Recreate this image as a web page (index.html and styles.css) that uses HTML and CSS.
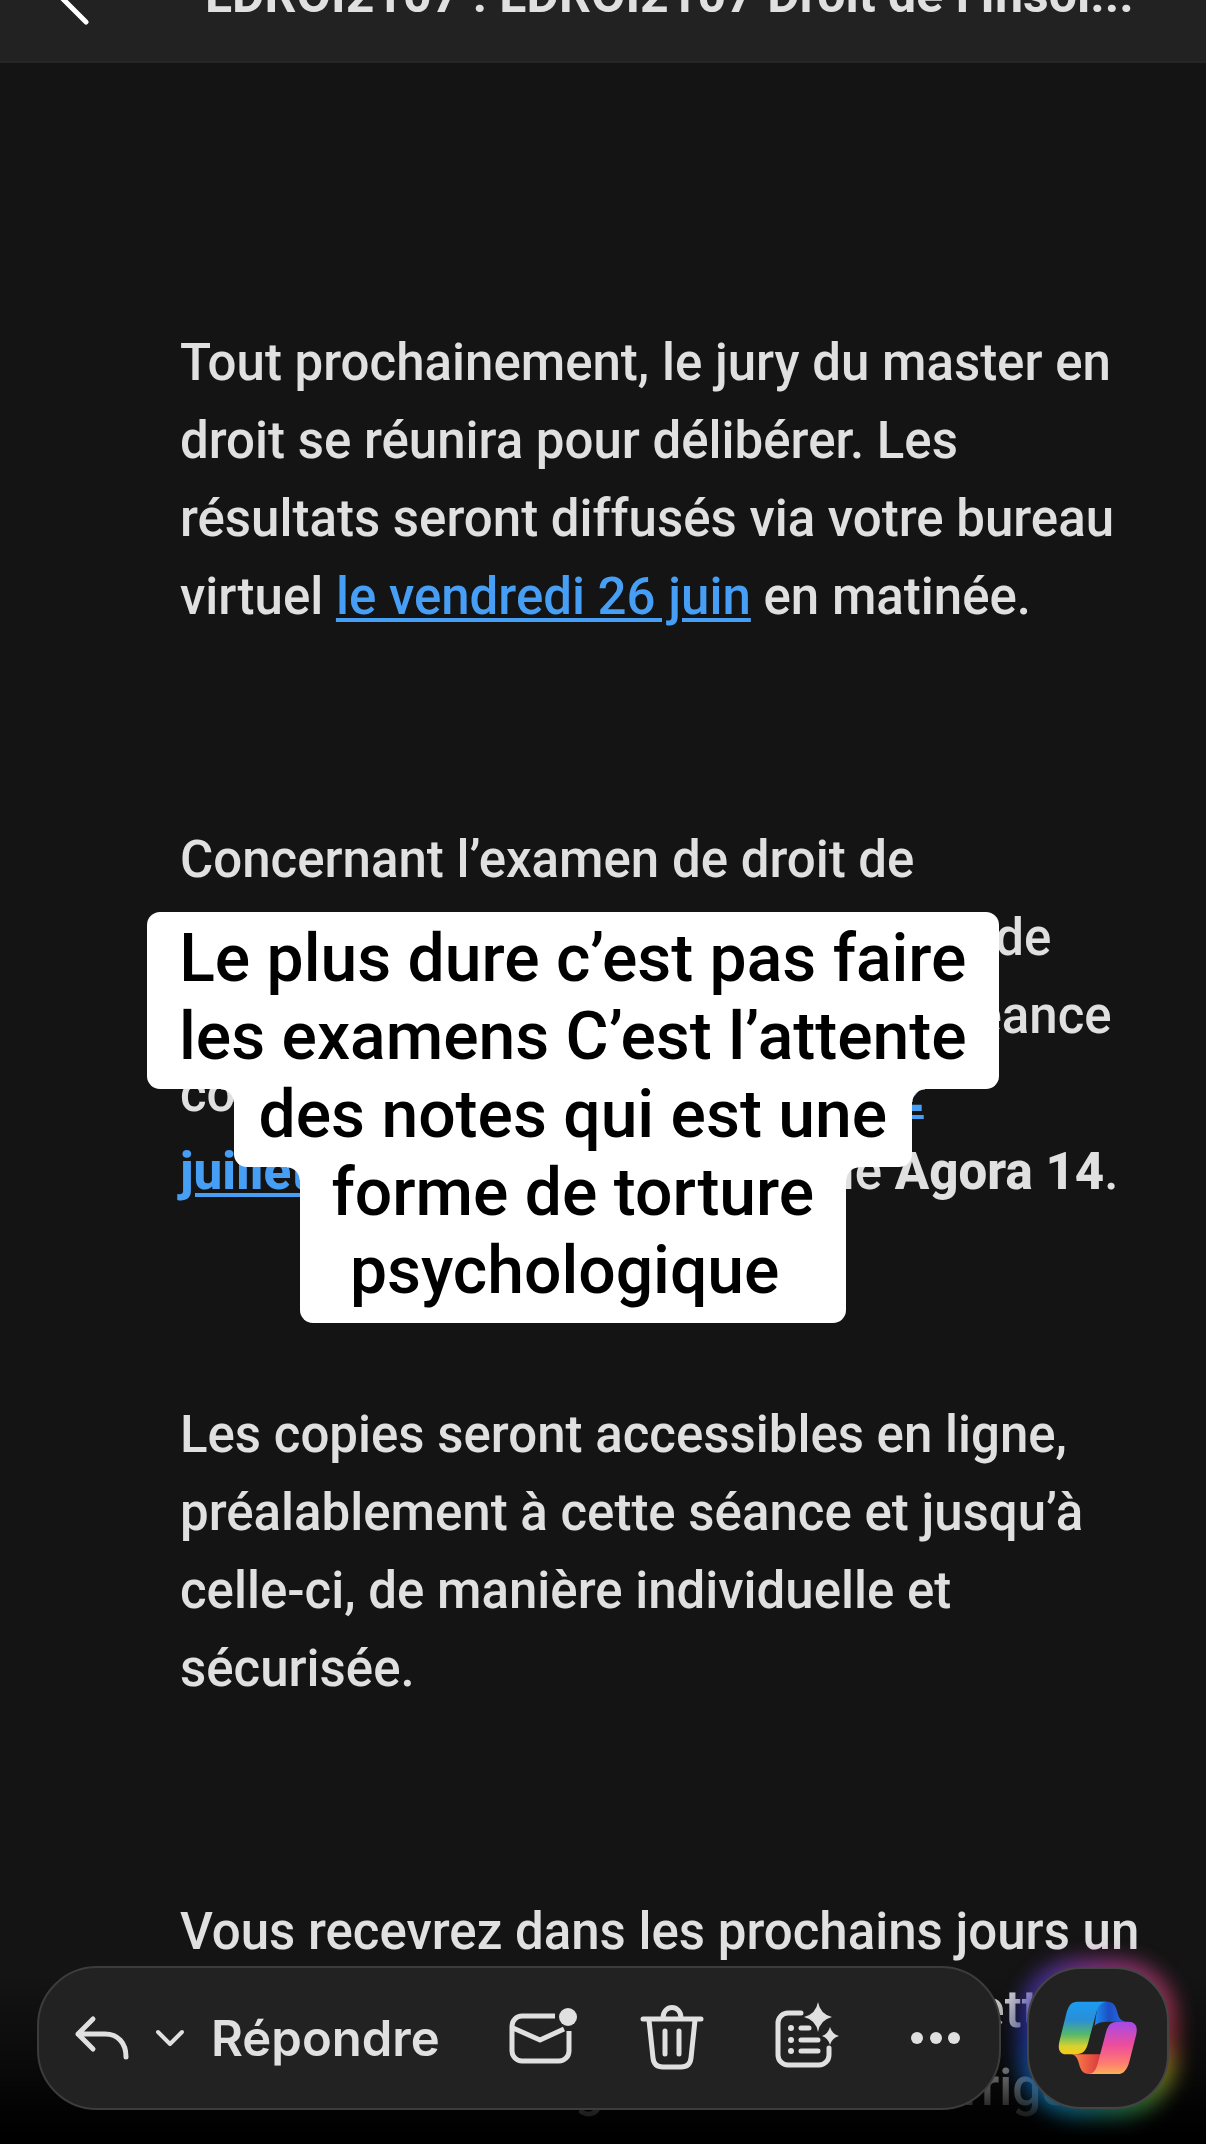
FILE: index.html
```
<!DOCTYPE html>
<html lang="fr">
<head>
    <meta charset="UTF-8">
    <meta name="viewport" content="width=device-width, initial-scale=1.0">
    <title>LDROI2107</title>
    <link rel="stylesheet" href="styles.css">
</head>
<body>
    <header class="topbar">
        <button class="back-button" aria-label="Retour">
            <svg width="34" height="60" viewBox="0 0 34 60"><path d="M30 57 L3 30 L30 3"/></svg>
        </button>
        <h1 class="subject">LDROI2107 : LDROI2107 Droit de l’Insol...</h1>
    </header>

    <main class="mail">
        <p>Tout prochainement, le jury du master en<br>
        droit se réunira pour délibérer. Les<br>
        résultats seront diffusés via votre bureau<br>
        virtuel <a href="#">le vendredi 26 juin</a> en matinée.</p>

        <p>Concernant l’examen de droit de<br>
        l’insolvabilité, une séance publique, de<br>
        consultation sera tenue dans une séance<br>
        collective programmée <a class="strong" href="#">le jeudi 2<br>
        juillet</a> de 10 h à 12 h en la salle <b>Agora 14</b>.</p>

        <p>Les copies seront accessibles en ligne,<br>
        préalablement à cette séance et jusqu’à<br>
        celle-ci, de manière individuelle et<br>
        sécurisée.</p>

        <p>Vous recevrez dans les prochains jours un<br>
        courriel avec les consignes et une lettre<br>
        sur l’examen en ligne et donc le corrigé</p>
    </main>

    <!-- Texte posé sur la vidéo -->
    <div class="caption">
        <div class="caption-block">Le plus dure c’est pas faire<br>les examens C’est l’attente</div>
        <div class="caption-block narrow">des notes qui est une</div>
        <div class="caption-block">forme de torture<br>psychologique&nbsp;</div>
    </div>

    <footer class="bottom">
        <div class="toolbar">
            <button class="reply-button">
                <svg width="54" height="44" viewBox="0 0 54 44"><path d="M18 3 L3 18 L18 33 M3 18 H30 C43 18 51 27 51 41"/></svg>
                <svg width="30" height="44" viewBox="0 0 30 44"><path class="thin" d="M3 16 L15 28 L27 16"/></svg>
                <span>Répondre</span>
            </button>
            <button class="icon-button" aria-label="Marquer comme non lu">
                <svg width="72" height="72" viewBox="-4 0 72 72">
                    <path class="butt" d="M51 14 H18 A10 10 0 0 0 8 24 V49 A10 10 0 0 0 18 59 H55 A10 10 0 0 0 65 49 V29 M9 26 L36 38 L60 27"/>
                    <circle class="fill" cx="64" cy="15" r="9"/>
                </svg>
            </button>
            <button class="icon-button" aria-label="Supprimer">
                <svg width="72" height="72" viewBox="-1 0 72 72">
                    <path d="M9 17 H67 M29 16 C29 2 47 2 47 16 M15 18 L19 56 Q20 65 29 65 H47 Q56 65 57 56 L61 18 M31 29 V52 M45 29 V52"/>
                </svg>
            </button>
            <button class="icon-button" aria-label="Résumer">
                <svg width="72" height="72" viewBox="0 0 72 72">
                    <path d="M35 11 H22 A10 10 0 0 0 12 21 V53 A10 10 0 0 0 22 63 H53 A10 10 0 0 0 63 53 V46 M35 26 H43 M35 38 H52 M35 49 H52"/>
                    <circle class="fill" cx="25" cy="26" r="3"/>
                    <circle class="fill" cx="25" cy="38" r="3"/>
                    <circle class="fill" cx="25" cy="49" r="3"/>
                    <path class="fill" d="M52 0 Q54 12 66 15 Q54 18 52 30 Q50 18 38 15 Q50 12 52 0Z"/>
                    <path class="fill" d="M64 25 Q66 32 73 34 Q66 36 64 43 Q62 36 56 34 Q62 32 64 25Z"/>
                </svg>
            </button>
            <button class="icon-button" aria-label="Plus">
                <svg width="72" height="72" viewBox="0 0 72 72">
                    <circle class="fill" cx="18" cy="36" r="6"/>
                    <circle class="fill" cx="37" cy="36" r="6"/>
                    <circle class="fill" cx="55" cy="36" r="6"/>
                </svg>
            </button>
        </div>
        <div class="copilot">
            <button class="copilot-button" aria-label="Copilot">
                <svg width="80" height="74" viewBox="-2 -2 240 222">
                    <defs>
                        <linearGradient id="left" x1="0" y1="0" x2="0" y2="1">
                            <stop offset="0" stop-color="#1a9cf2"/>
                            <stop offset="0.35" stop-color="#2b8fd6"/>
                            <stop offset="0.62" stop-color="#55b86b"/>
                            <stop offset="0.85" stop-color="#d9d22e"/>
                            <stop offset="1" stop-color="#f7c916"/>
                        </linearGradient>
                        <linearGradient id="right" x1="0" y1="0" x2="0" y2="1">
                            <stop offset="0" stop-color="#a24be8"/>
                            <stop offset="0.45" stop-color="#ee4d9c"/>
                            <stop offset="0.8" stop-color="#ff7d70"/>
                            <stop offset="1" stop-color="#ffb057"/>
                        </linearGradient>
                        <linearGradient id="top" x1="0" y1="0" x2="1" y2="0">
                            <stop offset="0" stop-color="#1a8cf0"/>
                            <stop offset="0.45" stop-color="#1c4fc4"/>
                            <stop offset="1" stop-color="#2a6fe8"/>
                        </linearGradient>
                        <linearGradient id="low" x1="0" y1="0" x2="1" y2="0">
                            <stop offset="0" stop-color="#ff8a48"/>
                            <stop offset="1" stop-color="#d8333f"/>
                        </linearGradient>
                    </defs>
                    <path fill="url(#top)" d="M118 0 H146 C164 0 171 12 175 28 C179 44 184 59 202 60 H150 C130 60 118 62 108 72 Z"/>
                    <path fill="url(#low)" d="M35 158 H130 L112 217 H92 C72 217 66 204 62 190 C58 176 54 158 35 158Z"/>
                    <path fill="url(#left)" d="M56 0 H146 C126 1 118 14 113 32 L89 122 C82 148 74 158 50 158 H24 C2 158 -3 142 2 120 L24 32 C30 12 38 0 56 0Z"/>
                    <path fill="url(#right)" d="M178 60 H208 C230 60 238 74 233 97 L212 180 C205 205 194 217 178 217 H88 C106 216 112 204 117 186 L142 92 C148 70 156 60 178 60Z"/>
                </svg>
            </button>
        </div>
    </footer>
</body>
</html>
```
FILE: styles.css
```
body {
    margin: 0;
    min-height: 100vh;
    background-color: #141414;
    color: #e0e0e0;
    font-family: Roboto, "Liberation Sans", sans-serif;
}

button {
    padding: 0;
    border: none;
    background: none;
    color: inherit;
    cursor: pointer;
}

svg {
    display: block;
    overflow: visible;
    fill: none;
    stroke: #e0e0e0;
    stroke-width: 5;
    stroke-linecap: round;
    stroke-linejoin: round;
}

svg .fill {
    fill: #e0e0e0;
    stroke: none;
}

svg .thin {
    stroke-width: 4;
}

svg .butt {
    stroke-linecap: butt;
}

/* La barre du haut dépasse de l'écran */
.topbar {
    display: flex;
    align-items: center;
    gap: 115px;
    height: 132px;
    margin-top: -71px;
    padding: 0 56px;
    background-color: #222;
    border-bottom: 2px solid #262626;
}

.back-button svg {
    stroke: #fff;
}

.subject {
    margin: 0;
    font-size: 50px;
    font-weight: 700;
    white-space: nowrap;
}

.mail {
    padding: 261px 0 0 180px;
    font-size: 51px;
    font-weight: 500;
    line-height: 78px;
    white-space: nowrap;
}

.mail p {
    margin: 0 0 185px;
}

.mail p:last-child {
    margin-bottom: 0;
}

.mail a {
    color: #479ef5;
    text-decoration-thickness: 4px;
    text-underline-offset: 4px;
}

.mail b,
.mail .strong {
    font-weight: 800;
}

.caption {
    position: absolute;
    top: 912px;
    left: 147px;
    display: flex;
    flex-direction: column;
    align-items: center;
    padding-top: 13px;
    color: #000;
    font-size: 66px;
    font-weight: 500;
    line-height: 78px;
    text-align: center;
    white-space: nowrap;
}

.caption-block {
    position: relative;
    margin-top: -13px;
    padding: 0 32px 13px;
    background-color: #fff;
    border-radius: 0 0 13px 13px;
}

.caption-block.narrow {
    padding: 0 25px 13px;
}

.caption-block:first-child {
    padding-top: 8px;
    border-radius: 13px;
}

/* Coins rentrants entre deux blocs */
.caption-block + .caption-block::before,
.caption-block + .caption-block::after {
    content: "";
    position: absolute;
    top: 13px;
    width: 13px;
    height: 13px;
}

.caption-block + .caption-block::before {
    right: 100%;
    background: radial-gradient(circle at 0 100%, transparent 12px, #fff 13px);
}

.caption-block + .caption-block::after {
    left: 100%;
    background: radial-gradient(circle at 100% 100%, transparent 12px, #fff 13px);
}

.bottom {
    position: fixed;
    left: 0;
    right: 0;
    bottom: 0;
    display: flex;
    align-items: center;
    gap: 26px;
    padding: 30px 37px 34px;
    background: linear-gradient(transparent 20%, rgba(0, 0, 0, 0.5) 64%, rgba(0, 0, 0, 0.85) 84%, #000);
}

.toolbar {
    flex: 1;
    display: flex;
    align-items: center;
    justify-content: space-between;
    box-sizing: border-box;
    height: 144px;
    padding: 0 28px 0 36px;
    background-color: #222;
    border: 2px solid #3c3c3c;
    border-radius: 60px;
}

.reply-button {
    display: flex;
    align-items: center;
    gap: 26px;
    font-family: Inter, sans-serif;
    font-size: 49px;
    font-weight: 600;
}

.copilot {
    position: relative;
}

/* Halo coloré autour du bouton */
.copilot::before {
    content: "";
    position: absolute;
    inset: -8px;
    border-radius: 60px;
    background: conic-gradient(#a03a98, #b03a62 60deg, #a8323e 90deg, #98901c 115deg, #2c8040 150deg, #107488 195deg, #0c6cb0 230deg, #2434b4 275deg, #5a36b0 320deg, #a03a98);
    filter: blur(10px);
    opacity: 0.8;
}

.copilot-button {
    position: relative;
    display: flex;
    align-items: center;
    justify-content: center;
    box-sizing: border-box;
    width: 142px;
    height: 142px;
    background-color: #222;
    border: 2px solid #444;
    border-radius: 54px;
}

.copilot-button svg {
    stroke: none;
}
```
